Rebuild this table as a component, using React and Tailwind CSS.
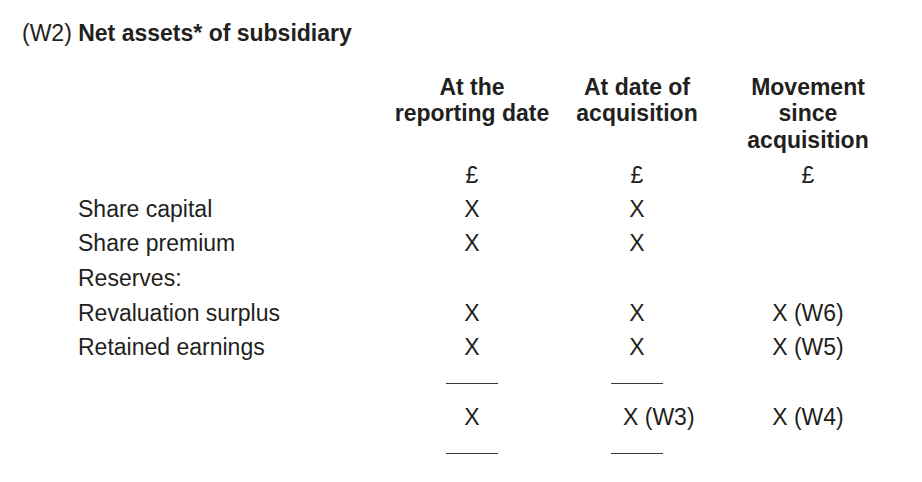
const rows = [
  { label: "Share capital", a: "X", b: "X", c: "" },
  { label: "Share premium", a: "X", b: "X", c: "" },
  { label: "Reserves:", a: "", b: "", c: "" },
  { label: "Revaluation surplus", a: "X", b: "X", c: "X (W6)" },
  { label: "Retained earnings", a: "X", b: "X", c: "X (W5)" },
];

function Rule() {
  return (
    <div className="flex justify-center pt-[18px]">
      <div className="w-[52px] h-[1.3px] bg-[#3a3a3a]" />
    </div>
  );
}

export default function App() {
  return (
    <div
      className="w-[922px] h-[482px] bg-white text-[#231f20] text-[23px]"
      style={{ fontFamily: '"Liberation Sans", Arial, sans-serif' }}
    >
      {/* Title */}
      <div className="pt-[20px] pl-[22px] leading-[26px]">
        (W2) <span className="font-bold">Net assets* of subsidiary</span>
      </div>

      {/* Table */}
      <div className="mt-[28px] pl-[78px] grid grid-cols-[316px_156px_174px_168px]">
        {/* Headers */}
        <div />
        <div className="font-bold text-center leading-[26.3px]">
          At the
          <br />
          reporting date
        </div>
        <div className="font-bold text-center leading-[26.3px]">
          At date of
          <br />
          acquisition
        </div>
        <div className="font-bold text-center leading-[26.3px]">
          Movement
          <br />
          since
          <br />
          acquisition
        </div>

        {/* Currency row */}
        <div className="h-[39px]" />
        <div className="h-[39px] pt-[6px] leading-[33px] text-center">£</div>
        <div className="h-[39px] pt-[6px] leading-[33px] text-center">£</div>
        <div className="h-[39px] pt-[6px] leading-[33px] text-center">£</div>

        {rows.map((r) => (
          <div key={r.label} className="contents">
            <div className="h-[34.6px] leading-[34.6px]">{r.label}</div>
            <div className="h-[34.6px] leading-[34.6px] text-center">{r.a}</div>
            <div className="h-[34.6px] leading-[34.6px] text-center">{r.b}</div>
            <div className="h-[34.6px] leading-[34.6px] text-center">{r.c}</div>
          </div>
        ))}

        {/* Sub-total rules */}
        <div className="h-[35px]" />
        <Rule />
        <Rule />
        <div />

        {/* Total row */}
        <div className="h-[35px]" />
        <div className="h-[35px] leading-[35px] text-center">X</div>
        <div className="h-[35px] leading-[35px] pl-[73px]">X (W3)</div>
        <div className="h-[35px] leading-[35px] text-center">X (W4)</div>

        {/* Closing rules */}
        <div className="h-[35px]" />
        <Rule />
        <Rule />
        <div />
      </div>
    </div>
  );
}
